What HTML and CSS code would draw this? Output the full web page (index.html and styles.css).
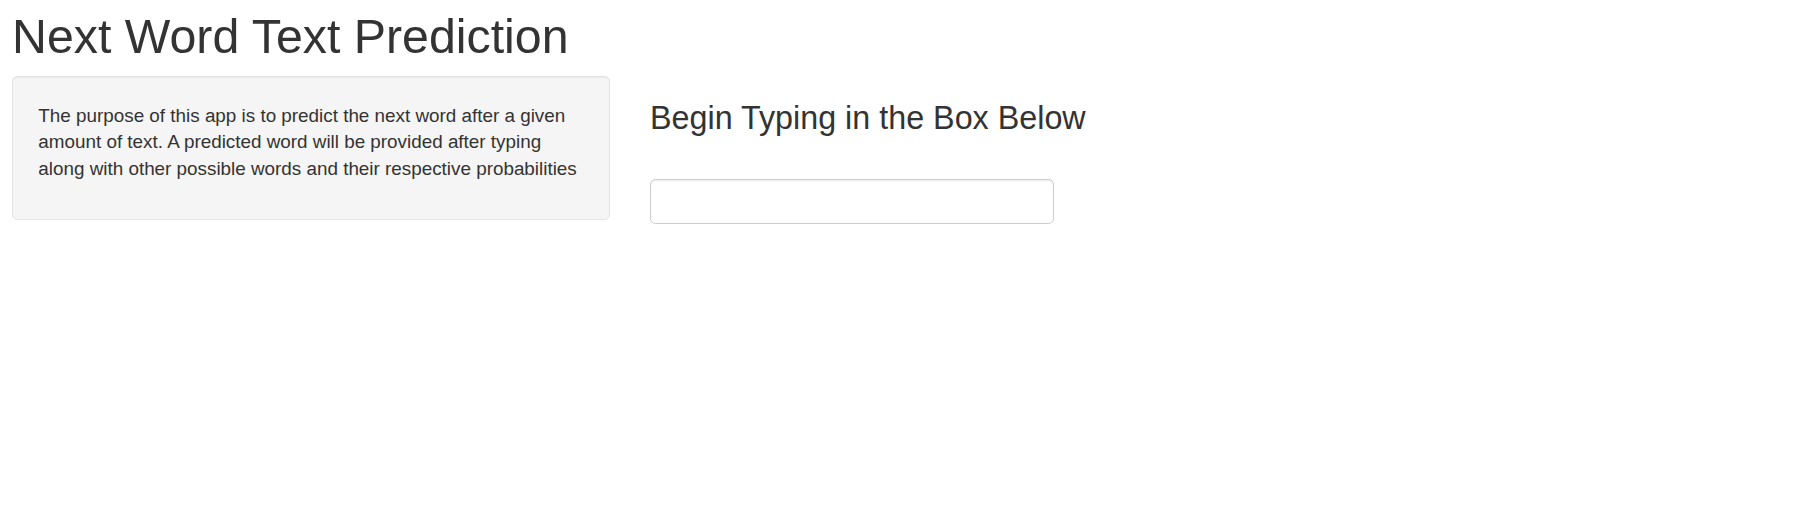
FILE: index.html
```html
<!DOCTYPE html>
<html lang="en">
<head>
<meta charset="utf-8">
<title>Next Word Text Prediction</title>
<link rel="stylesheet" href="styles.css">
</head>
<body>
<div class="page">
  <h2 class="title">Next Word Text Prediction</h2>
  <div class="row">
    <div class="sidebar">
      <p>The purpose of this app is to predict the next word after a given amount of text. A predicted word will be provided after typing along with other possible words and their respective probabilities</p>
    </div>
    <div class="main">
      <h3 class="subtitle">Begin Typing in the Box Below</h3>
      <div class="form-group">
        <input class="text-input" type="text" aria-label="Text input">
      </div>
    </div>
  </div>
</div>
</body>
</html>
```

FILE: styles.css
```css
html, body {
  margin: 0;
  padding: 0;
  background: #ffffff;
}

body {
  font-family: "Liberation Sans", Arial, Helvetica, sans-serif;
  font-size: 18.67px;
  line-height: 1.42857;
  color: #333333;
}

.page {
  padding: 0 12px;
}

.title {
  margin: 10px 0 13.33px;
  font-size: 48.3px;
  line-height: 1.1;
  font-weight: 500;
  color: #333333;
}

.row {
  display: flex;
  align-items: flex-start;
  gap: 40px;
}

.sidebar {
  width: 598px;
  box-sizing: border-box;
  background: #f5f5f5;
  border: 1px solid #e3e3e3;
  border-radius: 5.33px;
  padding: 25.33px;
  box-shadow: inset 0 1px 1px rgba(0, 0, 0, 0.05);
}

.sidebar p {
  margin: 0 0 11.33px;
  font-size: 18.85px;
  line-height: 26.4px;
}

.main {
  flex: 1;
}

.subtitle {
  margin: 25px 0 13.33px;
  font-size: 32.3px;
  line-height: 1.1;
  font-weight: 500;
  color: #333333;
}

.form-group {
  padding-top: 28.67px;
}

.text-input {
  display: block;
  width: 404px;
  height: 45.33px;
  box-sizing: border-box;
  padding: 8px 16px;
  font-family: inherit;
  font-size: 18.67px;
  color: #555555;
  background: #ffffff;
  border: 1px solid #cccccc;
  border-radius: 5.33px;
  box-shadow: inset 0 1.33px 1.33px rgba(0, 0, 0, 0.075);
  outline: none;
}
```
